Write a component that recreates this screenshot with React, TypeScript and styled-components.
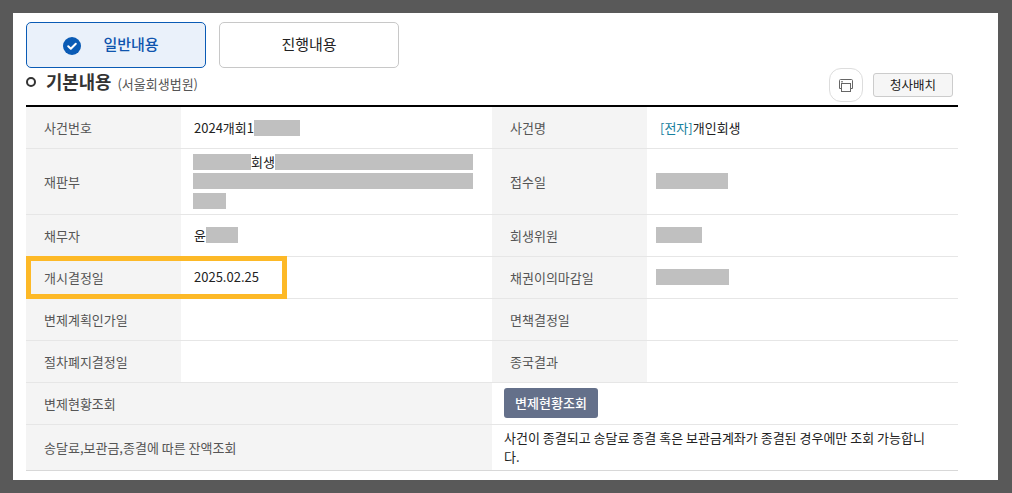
import React from 'react'
import styled, { createGlobalStyle } from 'styled-components'

const GlobalStyle = createGlobalStyle`
  html, body {
    margin: 0;
    padding: 0;
    background: #595959;
  }

  body {
    font-family: 'Noto Sans CJK KR', 'Noto Sans', sans-serif;
    font-size: 13px;
    color: #222;
  }
`

const Page = styled.div`
  box-sizing: border-box;
  width: 985px;
  height: 467px;
  margin: 13px 0 0 13px;
  padding: 9px 40px 0 13px;
  background: #fff;
`

const Tabs = styled.div`
  display: flex;
  gap: 13px;
`

const Tab = styled.button<{ $active?: boolean }>`
  box-sizing: border-box;
  width: 180px;
  height: 46px;
  padding: 0 0 3px ${p => (p.$active ? '30px' : '0')};
  display: flex;
  align-items: center;
  justify-content: center;
  position: relative;
  border: 1px solid ${p => (p.$active ? '#0a5bb5' : '#c8c8c8')};
  border-radius: 5px;
  background: ${p => (p.$active ? '#eaf1fa' : '#fff')};
  color: ${p => (p.$active ? '#0f55ae' : '#222')};
  font: inherit;
  font-size: 15px;
  font-weight: ${p => (p.$active ? 500 : 400)};

  svg {
    position: absolute;
    left: 36px;
    top: 14px;
  }
`

const TitleRow = styled.div`
  display: flex;
  justify-content: space-between;
  height: 37px;
`

const Title = styled.div`
  display: flex;
  align-items: baseline;
  height: 27px;
  line-height: 27px;
`

const Bullet = styled.span`
  box-sizing: border-box;
  width: 10px;
  height: 10px;
  margin-right: 10px;
  border: 2.5px solid #333;
  border-radius: 50%;
  align-self: center;
`

const Heading = styled.h2`
  margin: 0 6px 0 0;
  font-size: 17.8px;
  font-weight: 700;
  color: #333;
`

const Court = styled.span`
  font-size: 13px;
  color: #555;
`

const Tools = styled.div`
  display: flex;
  align-items: center;
  gap: 10px;
  padding-right: 5px;
  height: 34px;
`

const PrintButton = styled.button`
  box-sizing: border-box;
  width: 34px;
  height: 34px;
  padding: 0;
  display: flex;
  align-items: center;
  justify-content: center;
  border: 1px solid #ddd;
  border-radius: 12px;
  background: #fff;
`

const SmallButton = styled.button`
  box-sizing: border-box;
  width: 80px;
  height: 24px;
  padding: 0;
  border: 1px solid #ccc;
  border-radius: 3px;
  background: #f6f6f6;
  color: #222;
  font: inherit;
  font-size: 12.5px;
  line-height: 20px;
`

const TableWrap = styled.div`
  position: relative;
  border-top: 2px solid #000;
`

const Table = styled.table`
  width: 932px;
  border-collapse: collapse;
  table-layout: fixed;

  tr {
    border-bottom: 1px solid #e6e6e6;
  }

  tr:last-child {
    border-bottom: 1px solid #d8d8d8;
  }
`

const Row = styled.tr<{ $height: number }>`
  height: ${p => p.$height}px;
`

const Label = styled.th`
  box-sizing: border-box;
  padding: 0 8px 0 18px;
  background: #f4f4f4;
  color: #555;
  font-size: 13px;
  font-weight: 400;
  text-align: left;
`

const Value = styled.td`
  box-sizing: border-box;
  padding: 0 12px 0 13px;
  color: #222;
  font-size: 13px;
  line-height: 19.5px;
`

const Blur = styled.span<{ $width: number; $shift?: number }>`
  display: inline-block;
  width: ${p => p.$width}px;
  height: 16px;
  margin-left: ${p => p.$shift ?? 0}px;
  background: #c0c0c0;
  vertical-align: -3px;
`

const Tag = styled.span`
  color: #17809e;
`

const ActionCell = styled(Value)`
  padding-left: 12px;
`

const ActionButton = styled.button`
  box-sizing: border-box;
  display: block;
  width: 94px;
  height: 30px;
  padding: 0;
  border: 0;
  border-radius: 3px;
  background: #64708a;
  color: #fff;
  font: inherit;
  font-size: 13px;
  font-weight: 500;
`

const NoteCell = styled(Value)`
  padding: 0 20px 0 12px;
  line-height: 19px;
  word-break: break-all;
`

const Highlight = styled.div`
  position: absolute;
  left: 0;
  top: 149px;
  box-sizing: border-box;
  width: 261px;
  height: 43px;
  border: 5px solid #fdb927;
  pointer-events: none;
`

const CheckIcon = () => (
  <svg width="18" height="18" viewBox="0 0 18 18">
    <circle cx="9" cy="9" r="9" fill="#0a5bb5" />
    <path d="M5.2 9.2l2.6 2.5 5-5" fill="none" stroke="#fff" strokeWidth="2" strokeLinecap="round" strokeLinejoin="round" />
  </svg>
)

const PrintIcon = () => (
  <svg width="14" height="13" viewBox="0 0 14 13" fill="none" stroke="#666" strokeWidth="1">
    <path d="M2 9.5H.5V1.5c0-.6.4-1 1-1h11c.6 0 1 .4 1 1v8H12" />
    <path d="M2 2.8h2" />
    <rect x="2.5" y="4.5" width="9" height="8" />
  </svg>
)

const App: React.FC = () => {
  return (
    <Page>
      <GlobalStyle />
      <Tabs>
        <Tab $active>
          <CheckIcon />
          일반내용
        </Tab>
        <Tab>진행내용</Tab>
      </Tabs>
      <TitleRow>
        <Title>
          <Bullet />
          <Heading>기본내용</Heading>
          <Court>(서울회생법원)</Court>
        </Title>
        <Tools>
          <PrintButton aria-label="인쇄">
            <PrintIcon />
          </PrintButton>
          <SmallButton>청사배치</SmallButton>
        </Tools>
      </TitleRow>
      <TableWrap>
        <Table>
          <colgroup>
            <col width="155" />
            <col width="311" />
            <col width="155" />
            <col width="311" />
          </colgroup>
          <tbody>
            <Row $height={41}>
              <Label>사건번호</Label>
              <Value>
                2024개회1
                <Blur $width={46} />
              </Value>
              <Label>사건명</Label>
              <Value>
                <Tag>[전자]</Tag>개인회생
              </Value>
            </Row>
            <Row $height={66}>
              <Label>재판부</Label>
              <Value>
                <Blur $width={58} $shift={-1} />
                회생
                <Blur $width={198} />
                <Blur $width={280} $shift={-1} />
                <Blur $width={33} $shift={-1} />
              </Value>
              <Label>접수일</Label>
              <Value>
                <Blur $width={72} $shift={-4} />
              </Value>
            </Row>
            <Row $height={42}>
              <Label>채무자</Label>
              <Value>
                윤<Blur $width={32} />
              </Value>
              <Label>회생위원</Label>
              <Value>
                <Blur $width={46} $shift={-4} />
              </Value>
            </Row>
            <Row $height={42}>
              <Label>개시결정일</Label>
              <Value>2025.02.25</Value>
              <Label>채권이의마감일</Label>
              <Value>
                <Blur $width={73} $shift={-4} />
              </Value>
            </Row>
            <Row $height={42}>
              <Label>변제계획인가일</Label>
              <Value />
              <Label>면책결정일</Label>
              <Value />
            </Row>
            <Row $height={42}>
              <Label>절차폐지결정일</Label>
              <Value />
              <Label>종국결과</Label>
              <Value />
            </Row>
            <Row $height={42}>
              <Label colSpan={2}>변제현황조회</Label>
              <ActionCell colSpan={2}>
                <ActionButton>변제현황조회</ActionButton>
              </ActionCell>
            </Row>
            <Row $height={46}>
              <Label colSpan={2}>송달료,보관금,종결에 따른 잔액조회</Label>
              <NoteCell colSpan={2}>
                사건이 종결되고 송달료 종결 혹은 보관금계좌가 종결된 경우에만 조회 가능합니다.
              </NoteCell>
            </Row>
          </tbody>
        </Table>
        <Highlight />
      </TableWrap>
    </Page>
  )
}

export default App
